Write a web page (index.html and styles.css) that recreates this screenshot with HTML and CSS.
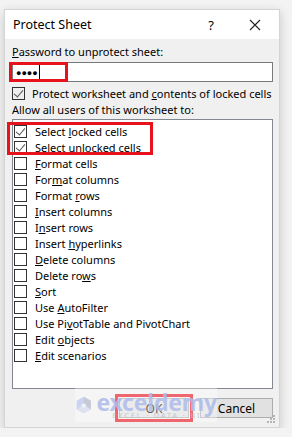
FILE: index.html
```html
<!DOCTYPE html>
<html lang="en">
<head>
    <meta charset="UTF-8">
    <title>Protect Sheet</title>
    <link rel="stylesheet" href="styles.css">
</head>
<body>
<div class="dialog">
    <div class="titlebar">
        <span class="title">Protect Sheet</span>
        <span class="help">?</span>
        <span class="close">
            <svg width="12" height="12" viewBox="0 0 12 12"><path d="M1 1L11 11M11 1L1 11" stroke="#222" stroke-width="1.1" fill="none"/></svg>
        </span>
    </div>
    <div class="body">
        <div class="label"><u>P</u>assword to unprotect sheet:</div>
        <div class="input">
            <span class="dots">&#9679;&#9679;&#9679;&#9679;</span><span class="caret"></span>
            <span class="mark mark-pass"></span>
        </div>
        <div class="check-row">
            <span class="box checked"></span>
            <span>Protect worksheet and <u>c</u>ontents of locked cells</span>
        </div>
        <div class="label allow">Allow all users of this worksheet to:</div>
        <div class="list">
            <div class="group">
                <div class="item"><span class="box checked"></span><span>Select <u>l</u>ocked cells</span></div>
                <div class="item"><span class="box checked"></span><span>Select <u>u</u>nlocked cells</span></div>
                <span class="mark mark-group"></span>
            </div>
            <div class="item"><span class="box"></span><span><u>F</u>ormat cells</span></div>
            <div class="item"><span class="box"></span><span>For<u>m</u>at columns</span></div>
            <div class="item"><span class="box"></span><span>Format <u>r</u>ows</span></div>
            <div class="item"><span class="box"></span><span><u>I</u>nsert columns</span></div>
            <div class="item"><span class="box"></span><span>I<u>n</u>sert rows</span></div>
            <div class="item"><span class="box"></span><span>Insert <u>h</u>yperlinks</span></div>
            <div class="item"><span class="box"></span><span><u>D</u>elete columns</span></div>
            <div class="item"><span class="box"></span><span>Delete ro<u>w</u>s</span></div>
            <div class="item"><span class="box"></span><span><u>S</u>ort</span></div>
            <div class="item"><span class="box"></span><span>Use <u>A</u>utoFilter</span></div>
            <div class="item"><span class="box"></span><span>Use Pi<u>v</u>otTable and PivotChart</span></div>
            <div class="item"><span class="box"></span><span>Edit <u>o</u>bjects</span></div>
            <div class="item"><span class="box"></span><span><u>E</u>dit scenarios</span></div>
        </div>
        <div class="buttons">
            <div class="watermark">
                <svg width="26" height="30" viewBox="0 0 26 30">
                    <path d="M13 1L25 8V22L13 29L1 22V8Z" fill="#c6d0f3"/>
                    <path d="M13 1L25 8V22L13 15Z" fill="#c2c6d2"/>
                    <path d="M1 22L13 15L25 22L13 29Z" fill="#dbe1ee"/>
                    <path d="M9 14L13 12L17 14V18L13 20L9 18Z" fill="#eef0f4"/>
                </svg>
                <div class="wm-text">
                    <span class="wm-name">exceldemy</span>
                    <span class="wm-sub">EXCEL · DATA · BI</span>
                </div>
            </div>
            <button class="btn ok">OK</button>
            <button class="btn">Cancel</button>
        </div>
    </div>
    <svg class="grip" width="9" height="9" viewBox="0 0 9 9">
        <rect x="6" y="0" width="2" height="2" fill="#b5b5b5"/>
        <rect x="3" y="3" width="2" height="2" fill="#b5b5b5"/>
        <rect x="6" y="3" width="2" height="2" fill="#b5b5b5"/>
        <rect x="0" y="6" width="2" height="2" fill="#b5b5b5"/>
        <rect x="3" y="6" width="2" height="2" fill="#b5b5b5"/>
        <rect x="6" y="6" width="2" height="2" fill="#b5b5b5"/>
    </svg>
</div>
</body>
</html>
```

FILE: styles.css
```css
*{
    margin:0;
    padding:0;
    box-sizing:border-box;
}
body{
    background:#f3f3f3;
    font-family:"Noto Sans","Open Sans",sans-serif;
    font-size:11px;
    color:#000;
}
.dialog{
    position:relative;
    width:276px;
    height:419px;
    margin:9px 0 0 4px;
    background:#f0f0f0;
    border:1px solid #d4d4d4;
    box-shadow:0 3px 10px rgba(0,0,0,0.18);
}
.titlebar{
    height:29px;
    background:#fff;
    display:flex;
    align-items:center;
    padding-left:8px;
}
.title{
    flex:1;
    font-size:12.5px;
}
.help{
    width:14px;
    text-align:center;
    margin-right:31px;
    font-size:13px;
}
.close{
    display:flex;
    margin-right:18px;
}
.body{
    padding:5px 6px 0 7px;
}
.label{
    height:16px;
    line-height:16px;
}
.input{
    position:relative;
    height:20px;
    margin-top:2px;
    background:#fff;
    border:1px solid #7a7a7a;
    display:flex;
    align-items:center;
    padding-left:3px;
}
.dots{
    font-size:9px;
}
.caret{
    width:1px;
    height:14px;
    background:#000;
    margin-left:1px;
}
.mark{
    position:absolute;
    border:3px solid #e8121c;
}
.mark-pass{
    left:-4px;
    top:-1px;
    width:59px;
    height:20px;
}
.check-row{
    display:flex;
    align-items:center;
    height:16px;
    margin-top:3px;
}
.box{
    width:13px;
    height:13px;
    border:1px solid #333;
    background:#fff;
    margin-right:7px;
    flex:none;
    position:relative;
}
.check-row .box{
    background:transparent;
}
.box.checked::after{
    content:"";
    position:absolute;
    left:3px;
    top:0px;
    width:4px;
    height:8px;
    border-right:1.3px solid #555;
    border-bottom:1.3px solid #555;
    transform:rotate(40deg);
}
.allow{
    margin-top:1px;
}
.list{
    height:270px;
    margin-top:1px;
    background:#fff;
    border:1px solid #828790;
    padding-top:3px;
}
.group{
    position:relative;
}
.mark-group{
    left:-6px;
    top:-1px;
    width:146px;
    height:33px;
}
.item{
    display:flex;
    align-items:center;
    height:16px;
    padding-left:1px;
}
.item .box{
    margin-right:8px;
}
.buttons{
    position:relative;
    display:flex;
    justify-content:flex-end;
    gap:11px;
    margin-top:9px;
}
.btn{
    width:73px;
    height:20px;
    font-family:inherit;
    font-size:12px;
    background:#e1e1e1;
    border:1px solid #adadad;
    color:#000;
}
.btn.ok{
    width:70px;
    outline:3px solid #e8121c;
    outline-offset:1px;
}
.watermark{
    position:absolute;
    left:63px;
    top:-10px;
    width:142px;
    height:34px;
    display:flex;
    align-items:center;
    gap:5px;
    padding-left:1px;
    background:rgba(255,255,255,0.4);
    opacity:0.9;
    z-index:1;
    pointer-events:none;
}
.wm-text{
    display:flex;
    flex-direction:column;
    align-items:center;
    line-height:1;
    margin-top:2px;
}
.wm-name{
    font-size:23px;
    font-weight:bold;
    color:#b3bfec;
    letter-spacing:-0.2px;
    line-height:20px;
}
.wm-sub{
    font-size:7.5px;
    color:#c0c3cb;
    letter-spacing:1.8px;
    margin-top:0;
}
.grip{
    position:absolute;
    right:3px;
    bottom:3px;
}
```
